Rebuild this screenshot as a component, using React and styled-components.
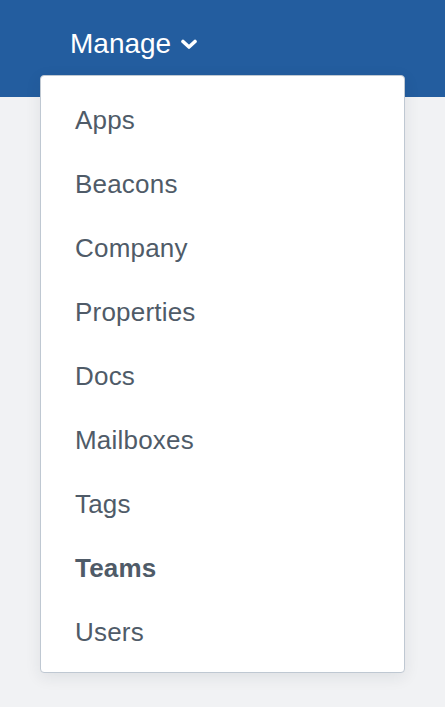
import styled, { createGlobalStyle } from "styled-components";

const GlobalStyle = createGlobalStyle`
  html, body {
    margin: 0;
    padding: 0;
    background: #f1f2f4;
    font-family: "Liberation Sans", Arial, sans-serif;
  }
`;

const Page = styled.div`
  position: relative;
  width: 445px;
  height: 707px;
  overflow: hidden;
`;

const Header = styled.header`
  height: 97px;
  background: #235d9f;
  box-sizing: border-box;
  padding: 28px 0 0 70px;
`;

const Toggle = styled.button`
  display: flex;
  align-items: center;
  gap: 10px;
  height: 32px;
  padding: 0;
  border: 0;
  background: none;
  color: #ffffff;
  font-family: inherit;
  font-size: 28px;
  line-height: 32px;
  cursor: pointer;
`;

const Menu = styled.ul`
  position: absolute;
  top: 75px;
  left: 40px;
  width: 365px;
  box-sizing: border-box;
  margin: 0;
  padding: 12px 0 8px;
  list-style: none;
  background: #ffffff;
  border: 1px solid #bfc8d2;
  border-radius: 4px;
  box-shadow: 0 4px 16px rgba(30, 45, 60, 0.09);
`;

const Item = styled.li`
  height: 64px;
  padding-left: 34px;
  color: #4f5b68;
  font-size: 26px;
  line-height: 64px;
  letter-spacing: 0.2px;
  font-weight: ${(p) => (p.$active ? 700 : 400)};
  cursor: pointer;
`;

const items = [
  "Apps",
  "Beacons",
  "Company",
  "Properties",
  "Docs",
  "Mailboxes",
  "Tags",
  "Teams",
  "Users",
];

function Chevron() {
  return (
    <svg width="16" height="10" viewBox="0 0 16 10">
      <polyline
        points="2,2.5 8,8 14,2.5"
        fill="none"
        stroke="#ffffff"
        strokeWidth="3.6"
        strokeLinecap="round"
        strokeLinejoin="round"
      />
    </svg>
  );
}

export default function App() {
  return (
    <Page>
      <GlobalStyle />
      <Header>
        <Toggle>
          Manage
          <Chevron />
        </Toggle>
      </Header>
      <Menu>
        {items.map((name) => (
          <Item key={name} $active={name === "Teams"}>
            {name}
          </Item>
        ))}
      </Menu>
    </Page>
  );
}
